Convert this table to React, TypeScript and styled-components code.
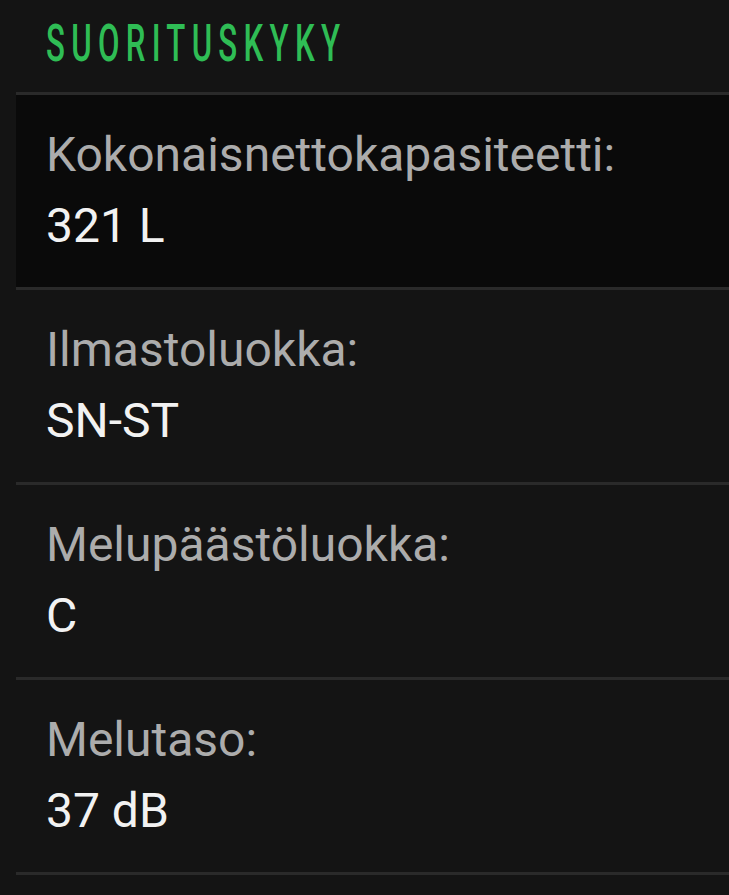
import React from "react";
import styled, { createGlobalStyle } from "styled-components";

const Global = createGlobalStyle`
  html, body { margin: 0; padding: 0; background: #141414; }
  body { font-family: Roboto, "Noto Sans", sans-serif; }
`;

const Page = styled.div`
  background: #141414;
  min-height: 895px;
  padding-left: 16px;
  box-sizing: border-box;
  overflow: hidden;
`;

const HeadingBar = styled.div`
  height: 92px;
  box-sizing: border-box;
  padding: 18px 0 0 30px;
`;

const Heading = styled.h2`
  display: inline-block;
  margin: 0;
  font-family: Roboto, sans-serif;
  font-weight: 500;
  font-size: 52px;
  line-height: 52px;
  letter-spacing: 10.5px;
  color: #2fbd55;
  transform: scaleX(0.6);
  transform-origin: left center;
  white-space: nowrap;
`;

const List = styled.div`
  display: flex;
  flex-direction: column;
  border-top: 3px solid #2a2a2a;
`;

const Row = styled.div<{ $dark?: boolean }>`
  background: ${(p) => (p.$dark ? "#0a0a0a" : "#141414")};
  padding: 24px 0 0 30px;
  border-bottom: 3px solid #2a2a2a;
  height: 195px;
  box-sizing: border-box;
`;

const Label = styled.div`
  font-size: 48px;
  line-height: 71px;
  color: #acacac;
  white-space: nowrap;
`;

const Value = styled.div`
  font-size: 48px;
  line-height: 71px;
  color: #f2f2f2;
  white-space: nowrap;
`;

const items = [
  { label: "Kokonaisnettokapasiteetti:", value: "321 L", dark: true },
  { label: "Ilmastoluokka:", value: "SN-ST" },
  { label: "Melupäästöluokka:", value: "C" },
  { label: "Melutaso:", value: "37 dB" },
];

export default function App() {
  return (
    <>
      <Global />
      <Page>
        <HeadingBar>
          <Heading>SUORITUSKYKY</Heading>
        </HeadingBar>
        <List>
          {items.map((it) => (
            <Row key={it.label} $dark={it.dark}>
              <Label>{it.label}</Label>
              <Value>{it.value}</Value>
            </Row>
          ))}
        </List>
      </Page>
    </>
  );
}
